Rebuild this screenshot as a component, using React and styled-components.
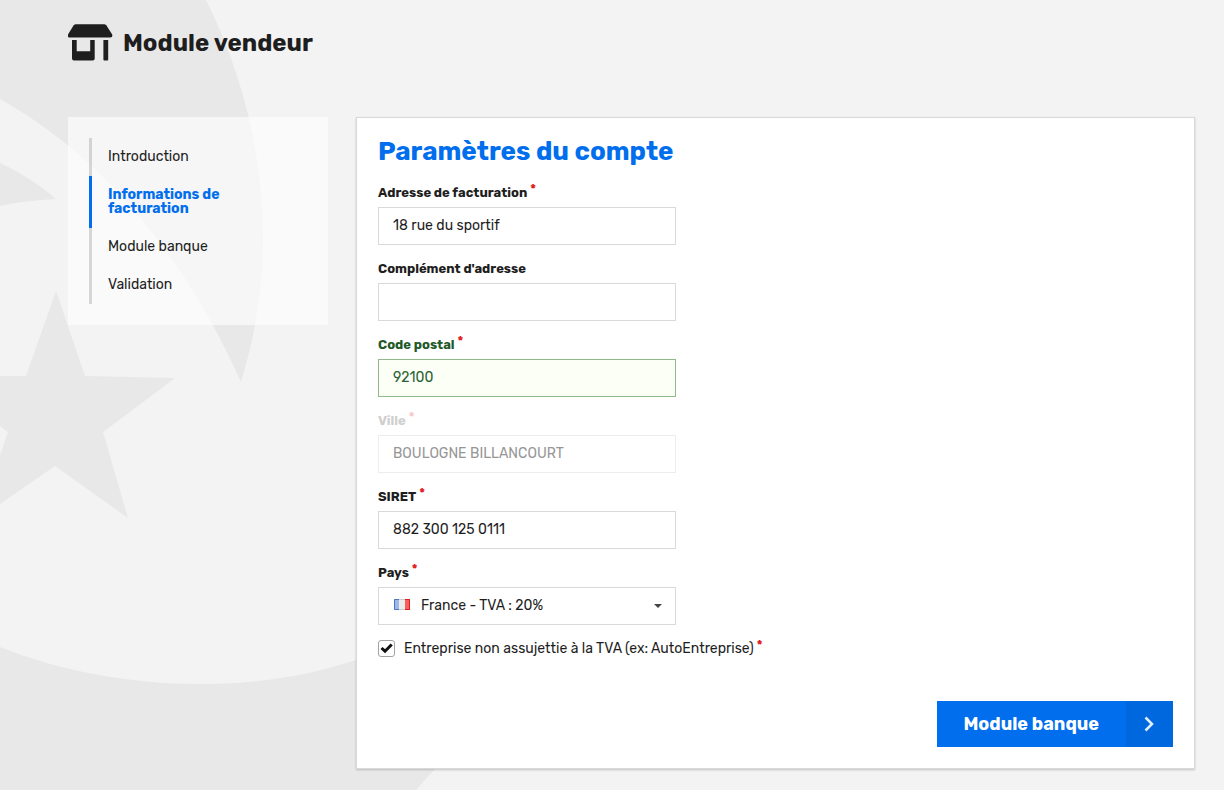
import React, { useState } from "react";
import styled, { createGlobalStyle } from "styled-components";

const GlobalStyle = createGlobalStyle`
  * {
    box-sizing: border-box;
  }
  body {
    margin: 0;
    background: #f3f3f3;
    color: #1e1e1e;
    font-family: Rubik, Roboto, sans-serif;
    font-size: 14px;
  }
  input, select, button {
    font-family: inherit;
  }
`;

const Backdrop = styled.svg`
  position: absolute;
  top: 0;
  left: 0;
  z-index: -1;
`;

const Page = styled.div`
  padding: 24px 29px 21px 68px;
`;

const Header = styled.header`
  display: flex;
  align-items: center;
  gap: 10px;
  margin-bottom: 56px;
`;

const PageTitle = styled.h1`
  margin: 0;
  font-size: 24px;
  line-height: 36px;
  font-weight: 700;
`;

const Columns = styled.div`
  display: grid;
  grid-template-columns: 260px 1fr;
  gap: 28px;
  align-items: start;
`;

const Sidebar = styled.nav`
  padding: 21px;
  background: rgba(255, 255, 255, 0.6);
`;

const StepList = styled.ol`
  margin: 0;
  padding: 0;
  list-style: none;
`;

const Step = styled.li`
  padding: 12px 80px 12px 16px;
  border-left: 3px solid ${(props) => (props.$active ? "#006eed" : "rgba(0, 0, 0, 0.14)")};
`;

const StepLink = styled.a`
  display: block;
  font-size: 14px;
  line-height: 14px;
  font-weight: ${(props) => (props.$active ? 700 : 400)};
  color: ${(props) => (props.$active ? "#006eed" : "#1e1e1e")};
  text-decoration: none;
`;

const Card = styled.form`
  padding: 17px 21px 21px;
  background: #fff;
  border: 1px solid #d9d9d9;
  box-shadow: 0 1px 2px rgba(0, 0, 0, 0.2);
`;

const CardTitle = styled.h2`
  margin: 0 0 14px;
  font-size: 26px;
  line-height: 34px;
  font-weight: 700;
  color: #006eed;
`;

const Field = styled.div`
  width: 298px;
  margin-bottom: 14px;
`;

const Label = styled.label`
  display: block;
  margin-bottom: 4px;
  font-size: 13px;
  line-height: 20px;
  font-weight: 700;
  color: ${(props) => (props.$valid ? "#1f5a2a" : props.$disabled ? "#cfcfcf" : "#1e1e1e")};
`;

const Star = styled.span`
  margin-left: 3px;
  font-size: 13px;
  line-height: 0;
  font-weight: 700;
  vertical-align: 4px;
  color: ${(props) => (props.$disabled ? "#f9c8ca" : "#e31b23")};
`;

const TextInput = styled.input`
  display: block;
  width: 100%;
  height: 38px;
  padding: 0 14px 2px;
  border: 1px solid ${(props) => (props.$valid ? "#91b98a" : "#d9d9d9")};
  border-radius: 0;
  outline: none;
  background: ${(props) => (props.$valid ? "#fcfff5" : "#fff")};
  color: ${(props) => (props.$valid ? "#2b6235" : "#1e1e1e")};
  font-size: 14px;

  &:disabled {
    border-color: #ededed;
    background: #fff;
    color: #969696;
  }
`;

const SelectBox = styled.div`
  position: relative;
`;

const Select = styled.select`
  display: block;
  width: 100%;
  height: 38px;
  padding: 0 30px 2px 42px;
  border: 1px solid #d9d9d9;
  border-radius: 0;
  outline: none;
  appearance: none;
  background: #fff;
  color: #1e1e1e;
  font-size: 14px;
`;

const Flag = styled.svg`
  position: absolute;
  top: 12px;
  left: 16px;
  pointer-events: none;
`;

const Caret = styled.svg`
  position: absolute;
  top: 17px;
  right: 14px;
  pointer-events: none;
`;

const CheckRow = styled.div`
  display: flex;
  align-items: center;
  gap: 9px;
`;

const CheckBox = styled.span`
  position: relative;
  display: flex;
`;

const Check = styled.input`
  width: 17px;
  height: 17px;
  margin: 0;
  appearance: none;
  border: 1px solid #a3a3a3;
  border-radius: 3px;
  background: #fff;
`;

const Tick = styled.svg`
  position: absolute;
  top: 0;
  left: 0;
  pointer-events: none;
`;

const CheckLabel = styled.label`
  font-size: 14px;
  line-height: 19px;
`;

const Actions = styled.div`
  display: flex;
  justify-content: flex-end;
  margin-top: 43px;
`;

const NextButton = styled.button`
  display: flex;
  align-items: stretch;
  height: 46px;
  padding: 0;
  border: 0;
  background: #006eed;
  color: #fff;
  font-size: 18px;
  font-weight: 700;
  cursor: pointer;
`;

const NextText = styled.span`
  padding: 0 27px 0 26px;
  line-height: 46px;
`;

const NextArrow = styled.span`
  display: flex;
  align-items: center;
  justify-content: center;
  width: 47px;
  background: #0068df;
`;

const steps = [
  { name: "Introduction" },
  { name: "Informations de facturation", active: true },
  { name: "Module banque" },
  { name: "Validation" },
];

const fields = [
  { id: "address", label: "Adresse de facturation", required: true },
  { id: "address2", label: "Complément d'adresse" },
  { id: "zip", label: "Code postal", required: true, valid: true },
  { id: "city", label: "Ville", required: true, disabled: true },
  { id: "siret", label: "SIRET", required: true },
];

function App() {
  const [values, setValues] = useState({
    address: "18 rue du sportif",
    address2: "",
    zip: "92100",
    city: "BOULOGNE BILLANCOURT",
    siret: "882 300 125 0111",
  });
  const [country, setCountry] = useState("fr");
  const [noVat, setNoVat] = useState(true);

  const handleChange = (e) => {
    setValues({ ...values, [e.target.name]: e.target.value });
  };

  return (
    <>
      <GlobalStyle />
      <Backdrop width="600" height="790" viewBox="0 0 600 790" fill="#e8e8e8" aria-hidden="true">
        <path d="M0 0H206C243 74 263 155 263 240C263 290 254 340 241 382C190 268 112 162 0 99Z" />
        <path d="M0 163C20 172 40 185 56 199C36 200 18 202 0 206Z" />
        <path d="M0 376H26L56 291L85 376L175 378L103 432L128 518L55 466L0 504V455L8 432L0 426Z" />
        <path d="M0 647C60 671 130 684 200 684C256 684 308 676 356 660L500 610V690L435 769L416 790H0Z" />
      </Backdrop>
      <Page>
        <Header>
          <svg width="45" height="37" viewBox="0 0 45 37" fill="#1e1e1e" aria-hidden="true">
            <path d="M8 0.200H36Q37.500 0.200 38.500 1.600L44.200 10.600Q45 13.600 42.300 13.600H2Q-0.800 13.600 0 10.600L5.500 1.600Q6.500 0.200 8 0.200Z" />
            <path d="M4 16H8.700V27.300H22.200V16H26.700V34.600Q26.700 36.600 24.700 36.600H6Q4 36.600 4 34.600Z" />
            <path d="M35.400 16H40.200V35.600Q40.200 36.600 39.200 36.600H36.400Q35.400 36.600 35.400 35.600Z" />
          </svg>
          <PageTitle>Module vendeur</PageTitle>
        </Header>
        <Columns>
          <Sidebar>
            <StepList>
              {steps.map((step) => (
                <Step key={step.name} $active={step.active}>
                  <StepLink href="#" $active={step.active}>{step.name}</StepLink>
                </Step>
              ))}
            </StepList>
          </Sidebar>
          <Card onSubmit={(e) => e.preventDefault()}>
            <CardTitle>Paramètres du compte</CardTitle>
            {fields.map((field) => (
              <Field key={field.id}>
                <Label htmlFor={field.id} $valid={field.valid} $disabled={field.disabled}>
                  {field.label}
                  {field.required && <Star $disabled={field.disabled}>*</Star>}
                </Label>
                <TextInput
                  id={field.id}
                  name={field.id}
                  type="text"
                  value={values[field.id]}
                  onChange={handleChange}
                  disabled={field.disabled}
                  $valid={field.valid}
                />
              </Field>
            ))}
            <Field>
              <Label htmlFor="country">
                Pays<Star>*</Star>
              </Label>
              <SelectBox>
                <Select id="country" value={country} onChange={(e) => setCountry(e.target.value)}>
                  <option value="fr">France - TVA : 20%</option>
                </Select>
                <Flag width="16" height="11" viewBox="0 0 16 11" aria-hidden="true">
                  <rect width="5" height="11" fill="#9db8e6" />
                  <rect x="5" width="6" height="11" fill="#ececec" />
                  <rect x="11" width="5" height="11" fill="#f5605a" />
                  <path d="M5 0.500H0.500V10.500H5" fill="none" stroke="#4a76c4" />
                  <path d="M5 0.500H11M5 10.500H11" fill="none" stroke="#cccccc" />
                  <path d="M11 0.500H15.500V10.500H11" fill="none" stroke="#dd1f1f" />
                </Flag>
                <Caret width="8" height="4" viewBox="0 0 8 4" fill="#444" aria-hidden="true">
                  <path d="M0 0H8L4 4Z" />
                </Caret>
              </SelectBox>
            </Field>
            <CheckRow>
              <CheckBox>
                <Check
                  id="no-vat"
                  type="checkbox"
                  checked={noVat}
                  onChange={(e) => setNoVat(e.target.checked)}
                />
                {noVat && (
                  <Tick width="17" height="17" viewBox="0 0 17 17" aria-hidden="true">
                    <path d="M3.500 8L7 11.200L13.700 4.500" fill="none" stroke="#111" strokeWidth="3" />
                  </Tick>
                )}
              </CheckBox>
              <CheckLabel htmlFor="no-vat">
                Entreprise non assujettie à la TVA (ex: AutoEntreprise)<Star>*</Star>
              </CheckLabel>
            </CheckRow>
            <Actions>
              <NextButton type="submit">
                <NextText>Module banque</NextText>
                <NextArrow>
                  <svg width="11" height="16" viewBox="0 0 11 16" aria-hidden="true">
                    <path d="M1.500 1.500L8 8L1.500 14.500" fill="none" stroke="#e3eefc" strokeWidth="2.500" />
                  </svg>
                </NextArrow>
              </NextButton>
            </Actions>
          </Card>
        </Columns>
      </Page>
    </>
  );
}

export default App;
